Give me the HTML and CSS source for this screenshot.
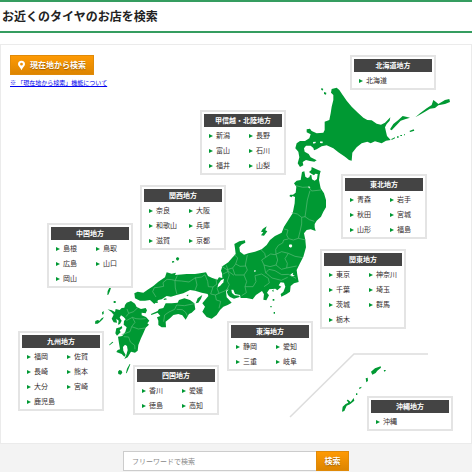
FILE: index.html
```html
<!DOCTYPE html>
<html lang="ja">
<head>
<meta charset="utf-8">
<title>お近くのタイヤのお店を検索</title>
<link rel="stylesheet" href="styles.css">
</head>
<body>
<header class="page-head"><h1>お近くのタイヤのお店を検索</h1></header>
<main class="panel">
  <div class="stage">
    <svg class="map" viewBox="1 45 470 398" aria-hidden="true">
      <path class="inset" d="M290 417L354 354H428"/>
      <g class="land" transform="translate(280 80) scale(.33333)">
        <path d="M155 27L170 23 178 30 186 42 200 62 215 80 232 97 250 113 262 120 275 121 290 131 303 134 315 128 331 112 329 122 320 132 315 142 318 155 321 168 332 180 318 182 305 190 285 184 272 190 262 185 245 190 230 202 217 218 215 242 207 240 195 230 175 217 160 205 140 196 125 199 110 208 102 211 100 204 92 197 78 197 72 205 74 215 86 222 92 232 110 241 103 245 90 243 78 240 68 246 70 256 60 261 53 250 58 232 55 215 46 205 50 190 60 183 75 183 88 175 92 163 80 157 80 148 90 146 95 153 110 160 130 158 134 150 134 125 148 120 152 100 155 80 160 60 160 45 153 38Z"/>
        <path d="M330 148L340 132 355 120 368 108 378 110 390 113 375 118 362 122 350 135 335 151ZM406 112L420 100 440 85 455 75 460 60 468 66 475 72 495 60 508 57 510 66 495 72 475 76 465 84 450 86 435 95 418 105ZM388 153L401 148 403 152 391 156ZM334 177L345 172 345 175 335 180ZM351 169h5v4h-5ZM361 165h5v3h-5ZM372 163h3v3h-3ZM125 24l5 3-3 5-4-4ZM132 36l7 2-1 6-6-2Z"/>
        <path class="water" d="M99 186l8-1v4l-7 2ZM121 184l8 1-2 5-7-1Z"/>
      </g>
      <g class="land" transform="translate(220 160) scale(.33333)">
        <path d="M246 36L253 34 256 50 262 54 268 52 270 46 274 45 276 58 284 62 291 57 293 42 286 41 282 46 274 41 267 36 274 30 275 21 286 26 296 31 302 33 299 44 297 60 302 85 312 100 318 120 318 142 310 155 303 170 290 182 284 192 284 202 287 213 272 208 260 210 252 220 256 240 258 262 250 290 240 310 230 330 232 345 236 366 222 370 212 378 210 395 200 402 184 410 182 402 190 396 196 380 192 368 182 367 176 376 184 380 172 391 166 386 148 388 141 398 147 406 139 421 130 419 132 403 126 393 118 398 108 405 98 418 80 414 62 414 60 405 45 402 40 389 34 389 36 399 44 406 58 407 59 411 42 416 30 411 24 405 20 395 26 388 18 392 20 412 25 417 35 428 23 435 10 440 0 450 -10 465 -25 476 -40 471 -53 455 -45 440 -53 430 -45 420 -35 408 -37 402 -55 398 -75 392 -90 390 -110 400 -130 405 -147 410 -160 408 -175 418 -185 420 -197 432 -210 420 -225 422 -240 422 -255 415 -257 400 -247 395 -230 398 -215 388 -200 378 -185 365 -165 352 -160 337 -145 341 -132 338 -135 345 -125 344 -100 342 -75 342 -55 339 -42 337 -36 348 -25 353 -8 359 -3 352 7 354 6 340 3 332 7 319 25 307 36 294 47 282 45 265 43 252 58 244 75 241 76 248 64 254 58 262 60 275 72 284 85 280 105 275 125 268 140 255 150 240 165 228 185 218 192 200 205 180 218 160 224 130 225 111 218 108 214 112 208 108 211 104 219 104 227 98 229 80 222 70 230 62 242 60Z"/>
        <path d="M123 215L128 207 140 199 136 211 142 214 132 227 123 226 130 217ZM158 417h5v5h-5ZM151 438h4v4h-4ZM161 456h4v5h-4ZM156 393l4-5 1 7Z"/>
        <path class="water" d="M207 254l7-1 3 5-4 5-6-3ZM212 343l8-5-2 6 7 4-8 1-6-1ZM265 79l6 2-2 4-4-2ZM104 330l4 2-3 4-3-2Z"/>
        <path class="border" d="M228 77L248 82 266 81 275 93 303 90M270 92L262 120 258 150 255 171M215 158L232 162 245 172 255 170 268 179 283 184M245 172L245 192 240 215 235 235M192 207L204 210 200 225 206 236 220 240 235 235 257 240M205 237L191 240 188 249 175 256 167 268 168 282M165 284L185 275 205 280 225 289 249 293M168 283L173 300 168 315 184 328 200 324 230 318M205 280L195 296 202 310 200 324M124 270L134 280 137 292 152 282 165 284M137 292L125 300 132 315 150 320 168 315M136 340L147 328 165 332 185 344 205 343 228 355M132 315L137 338 156 354 184 361 203 352M105 347L125 342 145 355 148 369 132 380M105 347L108 365 99 380 75 380 80 365 72 345 82 330 76 315 82 285M43 284L53 294 47 312 60 319 78 318M47 312L38 324 21 329 5 319M38 324L45 345 72 345M21 329L28 345 22 363 28 374 20 390M75 380L79 398 65 407"/>
      </g>
      <g class="land" transform="translate(95 240) scale(.33333)">
        <path d="M168 222L188 213 192 207 205 204 212 190 230 190 248 188 252 180 268 175 285 180 298 190 301 208 290 218 282 222 272 239 262 226 250 222 235 225 225 235 212 245 213 262 200 262 190 255 190 242 186 232 196 228 188 218 169 225Z"/>
        <path d="M303 188L308 175 322 165 318 176 310 188 302 190Z"/>
        <path d="M95 188L108 183 120 191 125 201 138 207 152 204 156 211 152 220 140 218 140 226 153 231 163 242 157 250 162 254 152 263 145 280 138 295 130 315 128 332 120 338 108 335 98 352 88 357 94 345 98 330 96 318 90 314 84 321 85 332 92 345 88 350 80 342 64 336 68 330 75 328 72 310 69 290 82 288 91 275 95 262 86 254 87 243 92 238 86 231 78 226 74 233 80 242 75 252 69 254 71 242 64 236 66 248 56 247 50 236 56 224 49 216 38 208 50 211 60 216 62 207 74 210 80 204 88 203 90 195Z"/>
        <path d="M64 265L75 262 80 258 82 264 74 271 77 277 66 287 61 280ZM37 165L38 153 43 143 48 143 45 153 40 164ZM56 183h6v6h-6ZM0 251L1 243 8 240 14 242 18 236 26 231 24 237 14 247 8 251ZM21 217l5-4 0 9-4 2ZM42 315l10-10 3 2-11 9ZM93 399L96 386 104 372 106 373 99 391 95 400ZM69 395l4-5 7 2 2 6-5 6-7-2ZM243 54l6-3 4 5-4 6-5-2ZM231 64l6-1 1 4-7 1ZM180 187l7-4 2 5-7 1ZM205 177l8-2 3 3-8 2ZM274 165l7-1-3 5Z"/>
        <path class="water" d="M367 143L370 132 378 121 387 116 385 127 377 136Z"/>
        <path class="border" d="M247 106L240 123 241 144 246 163M243 122L230 119 216 118 204 128 206 139 190 142 178 143 173 155 183 171M330 104L320 111 300 114 282 126 259 123 243 122M301 112L306 135 300 151M330 104L338 124 340 140 354 141 366 132M354 141L347 162 361 165 364 180 377 184 372 205M365 132L363 116M366 144L372 160 389 153 400 145M361 165L372 160M394 76L400 94 417 106M382 103L400 94M96 207L101 220 93 230M101 220L116 215 128 203M94 242L112 232 123 236 137 237 152 236M112 232L120 247 110 260 105 275 80 284M110 260L130 267 150 264M86 290L101 291 106 306 119 316 120 328M206 245L209 225 222 216 239 208 245 195 268 197 298 191M245 208L262 209 272 217 277 228"/>
      </g>
      <g class="land" transform="translate(280 340) scale(.33333)">
        <path d="M273 95L285 85 302 79 303 83 292 92 287 99 277 104ZM311 90l7 0-4 6ZM257 115l6-2 1 10-5 4ZM237 143l7-3 0 4-6 3ZM228 160l4 0 0 5-4 0ZM186 215L188 200 197 192 205 188 200 180 204 179 212 186 221 174 223 182 210 193 200 197 193 213Z"/>
      </g>
    </svg>

    <div class="locate">
      <button class="btn locate-btn" type="button">
        <svg class="pin" viewBox="0 0 8 11" aria-hidden="true"><path fill-rule="evenodd" d="M4 0a4 4 0 0 0-4 4c0 2 2.500 3.500 4 7 1.500-3.500 4-5 4-7a4 4 0 0 0-4-4Zm0 2.400a1.600 1.600 0 1 1 0 3.200 1.600 1.600 0 0 1 0-3.200Z"/></svg>現在地から検索</button>
      <a class="note" href="#about">※ 「現在地から検索」機能について</a>
    </div>

    <section class="area hokkaido"><h2>北海道地方</h2><ul><li><a href="#">北海道</a></li></ul></section>
    <section class="area koshinetsu"><h2>甲信越・北陸地方</h2><ul><li><a href="#">新潟</a></li><li><a href="#">長野</a></li><li><a href="#">富山</a></li><li><a href="#">石川</a></li><li><a href="#">福井</a></li><li><a href="#">山梨</a></li></ul></section>
    <section class="area tohoku"><h2>東北地方</h2><ul><li><a href="#">青森</a></li><li><a href="#">岩手</a></li><li><a href="#">秋田</a></li><li><a href="#">宮城</a></li><li><a href="#">山形</a></li><li><a href="#">福島</a></li></ul></section>
    <section class="area kansai"><h2>関西地方</h2><ul><li><a href="#">奈良</a></li><li><a href="#">大阪</a></li><li><a href="#">和歌山</a></li><li><a href="#">兵庫</a></li><li><a href="#">滋賀</a></li><li><a href="#">京都</a></li></ul></section>
    <section class="area chugoku"><h2>中国地方</h2><ul><li><a href="#">島根</a></li><li><a href="#">鳥取</a></li><li><a href="#">広島</a></li><li><a href="#">山口</a></li><li><a href="#">岡山</a></li></ul></section>
    <section class="area kanto"><h2>関東地方</h2><ul><li><a href="#">東京</a></li><li><a href="#">神奈川</a></li><li><a href="#">千葉</a></li><li><a href="#">埼玉</a></li><li><a href="#">茨城</a></li><li><a href="#">群馬</a></li><li><a href="#">栃木</a></li></ul></section>
    <section class="area tokai"><h2>東海地方</h2><ul><li><a href="#">静岡</a></li><li><a href="#">愛知</a></li><li><a href="#">三重</a></li><li><a href="#">岐阜</a></li></ul></section>
    <section class="area kyushu"><h2>九州地方</h2><ul><li><a href="#">福岡</a></li><li><a href="#">佐賀</a></li><li><a href="#">長崎</a></li><li><a href="#">熊本</a></li><li><a href="#">大分</a></li><li><a href="#">宮崎</a></li><li><a href="#">鹿児島</a></li></ul></section>
    <section class="area shikoku"><h2>四国地方</h2><ul><li><a href="#">香川</a></li><li><a href="#">愛媛</a></li><li><a href="#">徳島</a></li><li><a href="#">高知</a></li></ul></section>
    <section class="area okinawa"><h2>沖縄地方</h2><ul><li><a href="#">沖縄</a></li></ul></section>
  </div>
</main>
<form class="search">
  <input type="search" aria-label="フリーワードで検索" placeholder="フリーワードで検索">
  <button class="btn" type="submit">検索</button>
</form>
</body>
</html>
```
FILE: styles.css
```css
* {
  box-sizing: border-box;
}

body {
  margin: 0;
  min-height: 100vh;
  display: flex;
  flex-direction: column;
  background: #f3f3f3;
  color: #222;
  font-family: "Noto Sans CJK JP", sans-serif;
  font-size: 7px;
}

.page-head {
  padding: 5px 2px 6px;
  border-top: 2px solid #359d60;
  border-bottom: 2px solid #359d60;
  background: #fff;
}

.page-head h1 {
  margin: 0;
  font-size: 12px;
  line-height: 18px;
}

.panel {
  border: 1px solid #ebebeb;
  background: #fff;
  box-shadow: 0 -11px #fff;
  margin-top: 11px;
}

.stage {
  position: relative;
  width: 470px;
  margin: 0 auto;
}

.map {
  display: block;
  width: 100%;
}

.land {
  fill: #009933;
}

.water {
  fill: #fff;
}

.border {
  fill: none;
  stroke: #5fbd7c;
  stroke-width: 2;
}

.inset {
  fill: none;
  stroke: #ddd;
  stroke-width: 1.5;
}

.locate {
  position: absolute;
  left: 9px;
  top: 10px;
  display: flex;
  flex-direction: column;
  align-items: flex-start;
  gap: 2px;
}

.btn {
  border: 1px solid #e08a08;
  background: linear-gradient(#fe9a04, #dd8500);
  color: #fff;
  font: bold 8px/12px "Noto Sans CJK JP", sans-serif;
  text-shadow: 0 1px 1px #9a5c00;
}

.locate-btn {
  display: flex;
  align-items: center;
  gap: 5px;
  height: 20px;
  padding: 0 7px;
}

.pin {
  width: 7px;
  height: 11px;
  fill: #fff;
}

.note {
  color: #00e;
  font-size: 6px;
  line-height: 12px;
}

.area {
  position: absolute;
  width: 86px;
  padding: 2px 2px 0;
  border: 2px solid #e4e4e4;
  background: #fff;
}

.area h2 {
  margin: 0 0 1px;
  background: #444;
  color: #fff;
  font-size: 7px;
  line-height: 13px;
  text-align: center;
}

.area ul {
  display: grid;
  grid-template-columns: 40px 1fr;
  margin: 0;
  padding: 0 0 0 5px;
  list-style: none;
}

.area li {
  line-height: 15px;
  white-space: nowrap;
}

.area a {
  display: flex;
  align-items: center;
  gap: 3px;
  color: #332c2c;
  text-decoration: none;
}

.area a::before {
  content: "";
  border: solid transparent;
  border-width: 2px 0 2px 4px;
  border-left-color: #093;
}

.hokkaido { left: 349px; top: 10px; }
.koshinetsu { left: 199px; top: 65px; }
.tohoku { left: 340px; top: 129px; }
.kansai { left: 139px; top: 140px; }
.chugoku { left: 46px; top: 178px; }
.kanto { left: 319px; top: 204px; }
.tokai { left: 226px; top: 276px; }
.kyushu { left: 17px; top: 286px; }
.shikoku { left: 132px; top: 320px; }
.okinawa { left: 366px; top: 351px; }

.search {
  display: flex;
  justify-content: center;
  padding: 7px 0 1px;
}

.search input {
  width: 193px;
  height: 20px;
  margin: 0;
  padding: 0 8px;
  border: 1px solid #ccc;
  border-right: 0;
  border-radius: 0;
  background: #fff;
  font: 7px "Noto Sans CJK JP", sans-serif;
  appearance: none;
  outline: 0;
}

.search input::placeholder {
  color: #888;
}

.search .btn {
  width: 33px;
  height: 20px;
  padding: 0;
}
```
